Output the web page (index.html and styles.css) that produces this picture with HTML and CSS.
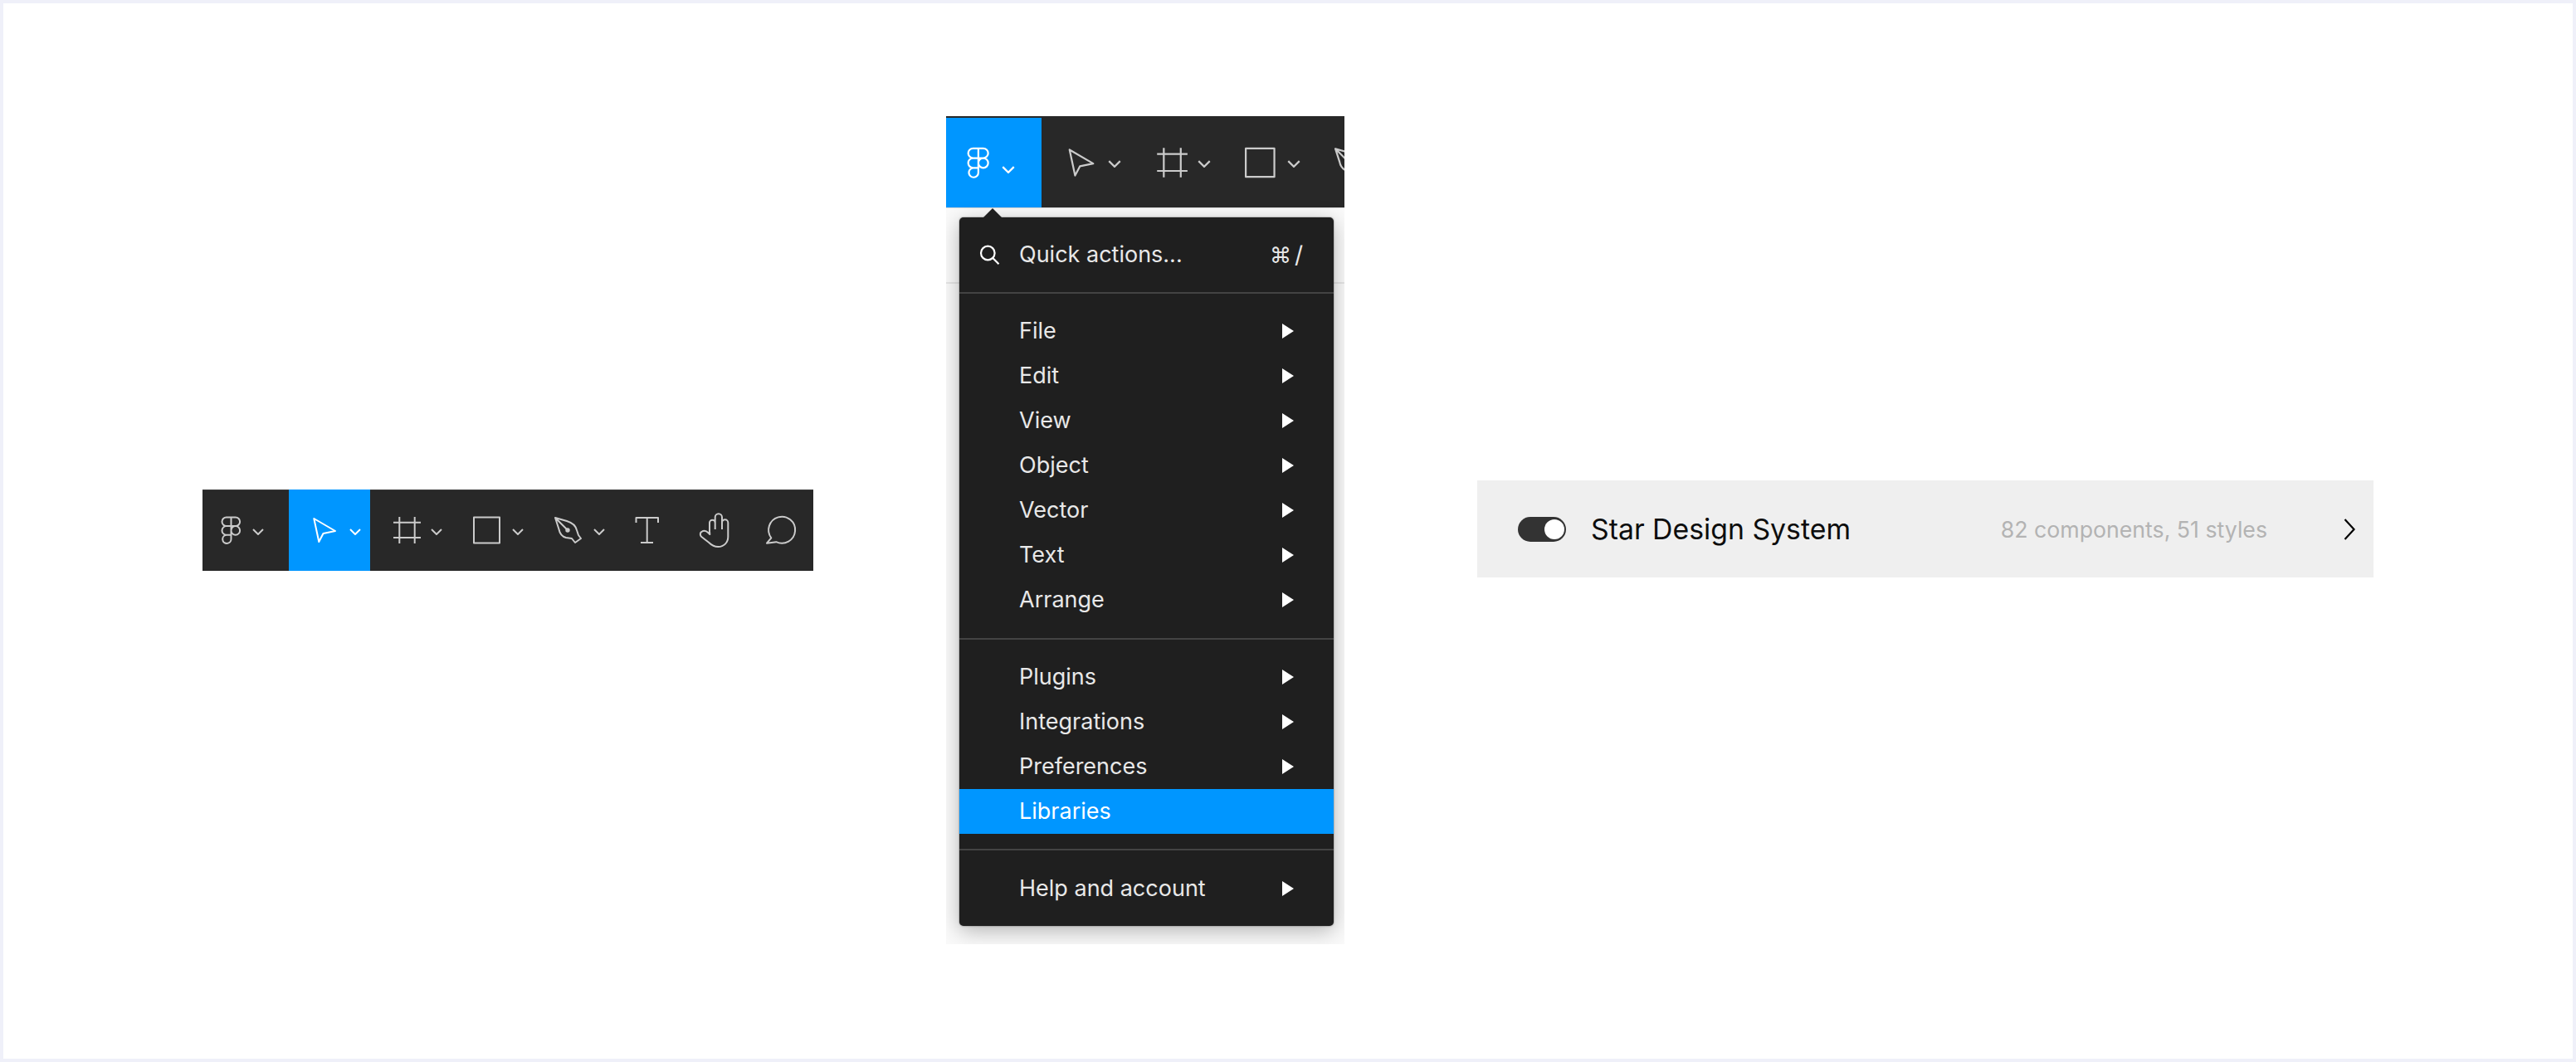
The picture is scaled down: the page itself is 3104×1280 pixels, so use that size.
FILE: index.html
```html
<!DOCTYPE html>
<html lang="en">
<head>
<meta charset="utf-8">
<title>Figma libraries</title>
<link rel="stylesheet" href="styles.css">
</head>
<body>
<svg class="defs" aria-hidden="true">
  <symbol id="i-figma" viewBox="0 0 36 36">
    <path d="M21.5 2.5H15.8a5.3 5.3 0 0 0 0 10.6h5.7zM21.5 2.5h5.3a5.3 5.3 0 0 1 0 10.6h-5.3zM21.5 13.1H15.8a5.3 5.3 0 0 0 0 10.6h5.7zM21.5 23.7H15.8a5.15 5.15 0 1 0 5.7 5.1zM21.5 18.4a5.3 5.3 0 1 0 10.6 0a5.3 5.3 0 1 0-10.6 0z"/>
  </symbol>
  <symbol id="i-arrow" viewBox="0 0 36 36">
    <path d="M4.3 4L30 19l-14.500 3-5.200 10z"/>
  </symbol>
  <symbol id="i-frame" viewBox="0 0 36 36">
    <path d="M9.300 2v32M27.700 2v32M2 8.700h33M2 27h33"/>
  </symbol>
  <symbol id="i-rect" viewBox="0 0 36 36">
    <rect x="1" y="2.500" width="31" height="31"/>
  </symbol>
  <symbol id="i-pen" viewBox="0 0 36 36" overflow="visible">
    <path d="M1 3l14 4q10 3 12 11l2 6 3 4-7 5-4-5-7-1q-7-2-8.500-10zM1 3l15 15"/>
    <circle class="dot" cx="16" cy="18" r="2.700"/>
  </symbol>
  <symbol id="i-text" viewBox="0 0 36 36">
    <path d="M4.500 9V3H31v6M17.700 3v30M10 33h15"/>
  </symbol>
  <symbol id="i-hand" viewBox="0 0 36 36" overflow="visible">
    <path d="M13 19V9a3.350 3.350 0 0 1 6.700 0V2.500a4.150 4.150 0 0 1 8.300 0V9a3.650 3.650 0 0 1 7.300 0v17c0 7-5 12-12 12-5 0-8-2-11-5l-9-7c-2-2-2-5 0-6 3-2 6-1 8 1l2 2zM19.700 9v8M28 9v8"/>
  </symbol>
  <symbol id="i-comment" viewBox="0 0 36 36" overflow="visible">
    <path d="M7.300 27.300L2 33.700l11.300-1.500A16 16 0 1 0 7.300 27.300z"/>
  </symbol>
  <symbol id="i-chev" viewBox="0 0 14 8">
    <path d="M1 1l6 6 6-6"/>
  </symbol>
</svg>

<main class="canvas">
  <nav class="toolbar toolbar-main">
    <div class="cell cell-logo"><svg class="icon"><use href="#i-figma"/></svg><svg class="chev"><use href="#i-chev"/></svg></div>
    <div class="cell cell-tool is-active"><svg class="icon"><use href="#i-arrow"/></svg><svg class="chev"><use href="#i-chev"/></svg></div>
    <div class="cell cell-tool"><svg class="icon"><use href="#i-frame"/></svg><svg class="chev"><use href="#i-chev"/></svg></div>
    <div class="cell cell-tool"><svg class="icon"><use href="#i-rect"/></svg><svg class="chev"><use href="#i-chev"/></svg></div>
    <div class="cell cell-tool"><svg class="icon"><use href="#i-pen"/></svg><svg class="chev"><use href="#i-chev"/></svg></div>
    <div class="cell cell-plain"><svg class="icon"><use href="#i-text"/></svg></div>
    <div class="cell cell-plain"><svg class="icon"><use href="#i-hand"/></svg></div>
    <div class="cell cell-plain"><svg class="icon"><use href="#i-comment"/></svg></div>
  </nav>

  <section class="panel">
    <nav class="toolbar toolbar-big">
      <div class="cell cell-logo is-active"><svg class="icon"><use href="#i-figma"/></svg><svg class="chev"><use href="#i-chev"/></svg></div>
      <div class="cell cell-tool cell-first"><svg class="icon"><use href="#i-arrow"/></svg><svg class="chev"><use href="#i-chev"/></svg></div>
      <div class="cell cell-tool"><svg class="icon"><use href="#i-frame"/></svg><svg class="chev"><use href="#i-chev"/></svg></div>
      <div class="cell cell-tool"><svg class="icon"><use href="#i-rect"/></svg><svg class="chev"><use href="#i-chev"/></svg></div>
      <div class="cell cell-tool"><svg class="icon"><use href="#i-pen"/></svg><svg class="chev"><use href="#i-chev"/></svg></div>
    </nav>
    <div class="menu">
      <div class="group group-search">
        <div class="row row-search">
          <svg class="search" viewBox="0 0 26 26"><circle cx="10.300" cy="11" r="8.300"/><path d="M16.300 17l7.200 7.200"/></svg>
          <span class="label">Quick actions...</span>
          <span class="shortcut">⌘<span class="slash">/</span></span>
        </div>
      </div>
      <div class="group group-a">
        <div class="row"><span class="label">File</span><i class="tri"></i></div>
        <div class="row"><span class="label">Edit</span><i class="tri"></i></div>
        <div class="row"><span class="label">View</span><i class="tri"></i></div>
        <div class="row"><span class="label">Object</span><i class="tri"></i></div>
        <div class="row"><span class="label">Vector</span><i class="tri"></i></div>
        <div class="row"><span class="label">Text</span><i class="tri"></i></div>
        <div class="row"><span class="label">Arrange</span><i class="tri"></i></div>
      </div>
      <div class="group group-b">
        <div class="row"><span class="label">Plugins</span><i class="tri"></i></div>
        <div class="row"><span class="label">Integrations</span><i class="tri"></i></div>
        <div class="row"><span class="label">Preferences</span><i class="tri"></i></div>
        <div class="row is-selected"><span class="label">Libraries</span></div>
      </div>
      <div class="group group-c">
        <div class="row"><span class="label">Help and account</span><i class="tri"></i></div>
      </div>
    </div>
  </section>

  <section class="library">
    <span class="toggle"><span class="knob"></span></span>
    <span class="lib-name">Star Design System</span>
    <span class="lib-meta">82 components, 51 styles</span>
    <svg class="lib-chev" viewBox="0 0 14 26"><path d="M1.500 1l11 12-11 12"/></svg>
  </section>
</main>
</body>
</html>
```

FILE: styles.css
```css
* { box-sizing: border-box; }

html, body { margin: 0; padding: 0; background: #fff; }

body {
  width: 3104px;
  height: 1280px;
  overflow: hidden;
  font-family: Inter, "Liberation Sans", sans-serif;
}

.defs { position: absolute; width: 0; height: 0; }

.canvas {
  width: 100%;
  height: 100%;
  border: 4px solid #eff0f9;
  padding: 0 0 2px 240px;
  display: flex;
  align-items: center;
  gap: 160px;
  background: #fff;
}

/* Toolbars */
.toolbar {
  display: flex;
  flex: none;
  background: #282828;
  color: #cbcbcb;
}

.toolbar-main {
  width: 736px;
  height: 98px;
  border-top: 1px solid #3c3c3c;
}

.cell {
  display: flex;
  align-items: center;
  flex: none;
  height: 100%;
}

.is-active { background: #0096ff; color: #fff; }

.icon {
  display: block;
  flex: none;
  width: 36px;
  height: 36px;
  overflow: visible;
  fill: none;
  stroke: currentColor;
  stroke-width: 2;
  stroke-linejoin: round;
}

.dot { fill: currentColor; stroke: none; }

.chev {
  display: block;
  flex: none;
  width: 14px;
  height: 8px;
  margin-left: 11px;
  margin-top: 3px;
  fill: none;
  stroke: currentColor;
  stroke-width: 2;
}

.toolbar-main .cell-logo { width: 104px; padding-left: 13px; }
.toolbar-main .cell-tool { width: 98px; padding-left: 26px; }
.cell-plain { width: 80px; padding-left: 22px; }

.toolbar-main .cell { margin-top: -1px; height: 98px; }

/* Panel with the opened menu */
.panel {
  position: relative;
  flex: none;
  width: 480px;
  height: 998px;
  overflow: hidden;
  background: #fafafa;
}

.panel::before {
  content: "";
  position: absolute;
  left: 0;
  right: 0;
  top: 200px;
  height: 2px;
  background: #e6e6e6;
}

.toolbar-big {
  position: relative;
  height: 111px;
  width: 480px;
  overflow: hidden;
  border-bottom: 1px solid #d8d8d8;
}

.toolbar-big .icon { width: 40px; height: 40px; margin-top: 2px; }

.toolbar-big .chev {
  width: 16px;
  height: 9px;
  margin-left: 11px;
  margin-top: 5px;
}

.toolbar-big .cell-logo {
  width: 115px;
  height: 108px;
  margin-top: 2px;
  padding-left: 15px;
}

.toolbar-big .cell-logo .icon { margin-top: 0; }
.toolbar-big .cell-logo .chev { margin-left: 12px; margin-top: 17px; }

.toolbar-big .cell-tool { width: 108px; padding-left: 30px; }
.toolbar-big .cell-first { width: 107px; padding-left: 29px; }

.menu {
  position: relative;
  width: 451px;
  height: 854px;
  margin: 11px 0 0 16px;
  border-radius: 5px;
  background: #1f1f1f;
  color: #e8e8e8;
  box-shadow: 0 0 2px rgba(0, 0, 0, .55), 0 6px 26px rgba(0, 0, 0, .28);
}

.menu::before {
  content: "";
  position: absolute;
  left: 29px;
  top: -11px;
  width: 22px;
  height: 11px;
  background: #1f1f1f;
  clip-path: polygon(50% 0, 100% 100%, 0 100%);
}

.group { border-bottom: 2px solid #434343; }
.group:last-child { border-bottom: 0; }
.group-search { padding: 18px 0 18px; }
.group-a { padding: 18px 0 19px; }
.group-b { padding: 18px 0 18px; }
.group-c { padding: 19px 0 18px; }

.row {
  display: flex;
  align-items: center;
  height: 54px;
  padding: 0 48px 0 72px;
  font-size: 27px;
  line-height: 54px;
}

.row-search { padding: 0 37px 0 24px; }

.search {
  display: block;
  flex: none;
  width: 26px;
  height: 26px;
  margin-right: 22px;
  fill: none;
  stroke: #fff;
  stroke-width: 2.200;
}

.label { flex: 1 1 auto; white-space: nowrap; }

.shortcut { flex: none; font-size: 26px; font-family: "DejaVu Sans", sans-serif; }

.slash { margin-left: 4px; font-family: Inter, sans-serif; font-size: 28px; }

.tri {
  display: block;
  flex: none;
  width: 14px;
  height: 18px;
  background: #fff;
  clip-path: polygon(0 0, 100% 50%, 0 100%);
}

.is-selected { background: #0096ff; color: #fff; }

/* Library row */
.library {
  display: flex;
  align-items: center;
  flex: none;
  width: 1080px;
  height: 117px;
  margin-bottom: 3px;
  padding: 0 22px 0 49px;
  background: #efefef;
}

.toggle {
  position: relative;
  flex: none;
  width: 58px;
  height: 30px;
  border-radius: 15px;
  background: #333;
}

.knob {
  position: absolute;
  right: 2px;
  top: 3px;
  width: 24px;
  height: 24px;
  border-radius: 50%;
  background: #fff;
}

.lib-name {
  margin-left: 30px;
  font-size: 33.800px;
  color: #0d0d0d;
  white-space: nowrap;
}

.lib-meta {
  margin-left: auto;
  font-size: 26.700px;
  color: #b3b3b3;
  white-space: nowrap;
}

.lib-chev {
  display: block;
  flex: none;
  width: 14px;
  height: 26px;
  margin-left: 92px;
  fill: none;
  stroke: #000;
  stroke-width: 2.200;
}
```
